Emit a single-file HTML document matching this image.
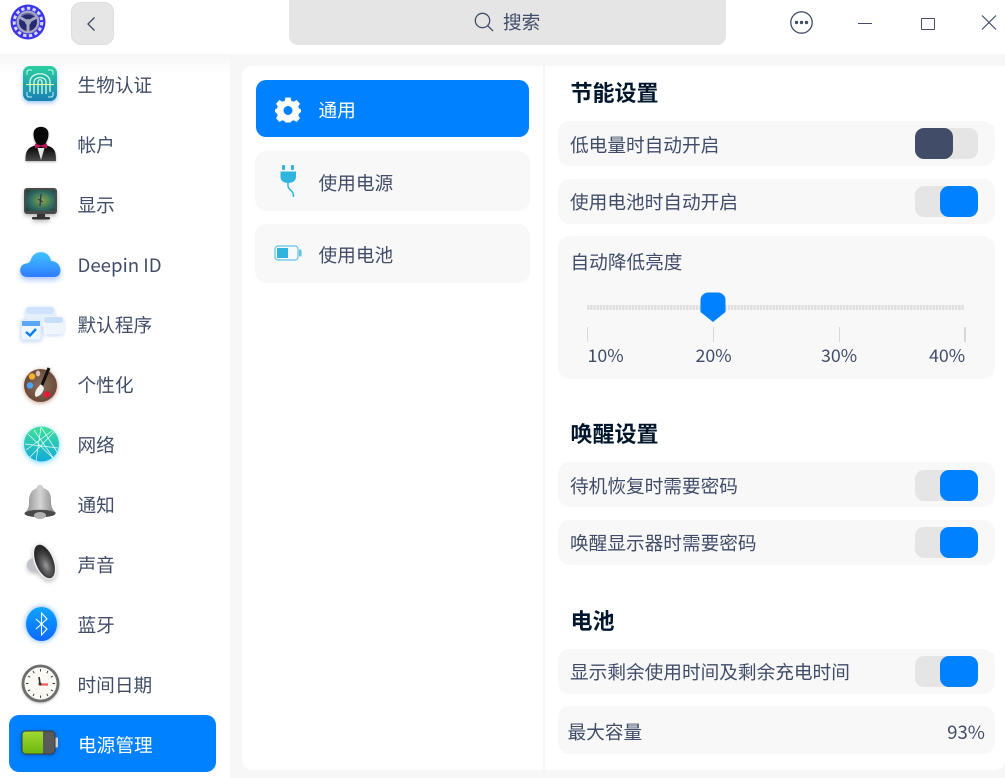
<!DOCTYPE html>
<html><head><meta charset="utf-8">
<style>
html,body{margin:0;padding:0}
body{width:1005px;height:778px;position:relative;overflow:hidden;background:#f7f7f7;font-family:"Noto Sans CJK SC","Liberation Sans",sans-serif;color:#414d68;font-size:18.67px}
.a{position:absolute}
.t{position:absolute;white-space:nowrap;line-height:28px;height:28px}
.r{position:absolute;left:558px;width:437px;background:#f8f8f8;border-radius:12px}
.h{position:absolute;left:570.5px;font-size:22px;font-weight:700;color:#00162c;line-height:30px;white-space:nowrap}
.sw{position:absolute;left:915px;width:63px;height:31px;background:#e5e5e5;border-radius:9px}
.sw i{position:absolute;top:0;width:38px;height:31px;border-radius:9px;background:#0081ff;right:0}
.sw.off i{left:0;right:auto;background:#414d68}
svg{position:absolute;overflow:visible}
</style></head><body>
<div class="a" style="left:0;top:0;width:1005px;height:54px;background:#fff"></div>
<div class="a" style="left:0;top:54px;width:230px;height:724px;background:#fff"></div>
<div class="a" style="left:0;top:54px;width:230px;height:20px;background:linear-gradient(#f6f6f6,#fff)"></div>
<div class="a" style="left:242px;top:66px;width:301px;height:704px;background:#fff;border-radius:10px 0 0 10px"></div>
<div class="a" style="left:545px;top:66px;width:460px;height:704px;background:#fff;border-radius:0 0 10px 0"></div>

<!-- logo -->
<svg style="left:10px;top:4px" width="36" height="36" viewBox="0 0 36 36">
<circle cx="18" cy="18" r="17.5" fill="#3a35ea"/>
<circle cx="18" cy="18" r="13.8" fill="none" stroke="#d6d6ee" stroke-width="3" stroke-dasharray="3.400 2.400"/>
<circle cx="18" cy="18" r="11.500" fill="#a5a6c0"/>
<circle cx="18" cy="18" r="9" fill="#252a72"/>
<path d="M18 18V28M18 18L9.300 13M18 18l8.700-5" stroke="#a5a6c0" stroke-width="3"/>
<path d="M12 11.500C15 9 21 9 24 11.500" stroke="#6d70a8" stroke-width="1.500" fill="none"/>
<circle cx="18" cy="18" r="3" fill="#a5a6c0"/>
</svg>
<!-- back -->
<div class="a" style="left:71px;top:2px;width:41px;height:41px;background:#e6e6e6;border:1px solid #dedede;border-radius:10px"></div>
<svg style="left:70px;top:2px" width="44" height="44"><path d="M24.500 15.500L18 22l6.500 6.500" fill="none" stroke="#414d68" stroke-width="1.400"/></svg>
<!-- search -->
<div class="a" style="left:289px;top:-8px;width:437px;height:53px;background:#e5e5e5;border-radius:9px"></div>
<svg style="left:473px;top:11px" width="22" height="22"><circle cx="9.500" cy="9.500" r="7.200" fill="none" stroke="#414d68" stroke-width="1.300"/><path d="M14.800 14.800L20 20" stroke="#414d68" stroke-width="1.300"/></svg>
<div class="t" style="left:503px;top:8px">搜索</div>
<!-- window buttons -->
<svg style="left:790px;top:11px" width="24" height="24"><circle cx="11.500" cy="11.500" r="10.700" fill="none" stroke="#414d68" stroke-width="1.300"/><circle cx="6.500" cy="11.500" r="1.700" fill="#414d68"/><circle cx="11.500" cy="11.500" r="1.700" fill="#414d68"/><circle cx="16.500" cy="11.500" r="1.700" fill="#414d68"/></svg>
<div class="a" style="left:858px;top:23px;width:14px;height:1px;background:#414d68"></div>
<div class="a" style="left:921px;top:18px;width:12px;height:10px;border:1.300px solid #414d68;border-radius:1px"></div>
<svg style="left:981px;top:15px" width="16" height="16"><path d="M1 0.500L15 14.500M15 0.500L1 14.500" stroke="#414d68" stroke-width="1.200"/></svg>

<!-- sidebar selected -->
<div class="a" style="left:9px;top:715px;width:207px;height:57px;background:#0081ff;border-radius:10px"></div>

<!-- sidebar icons -->
<svg style="left:23px;top:66px;filter:drop-shadow(0 2px 2px rgba(40,130,230,.45))" width="34" height="36" viewBox="0 0 34 36">
<defs><linearGradient id="g1" x1="0" y1="0" x2="0" y2="1"><stop offset="0" stop-color="#2ad0a0"/><stop offset="1" stop-color="#1a7fb5"/></linearGradient></defs>
<rect x="0" y="0" width="34" height="35" rx="7" fill="url(#g1)"/>
<path d="M4 9V6Q4 4 6 4H9M25 4H28Q30 4 30 6V9M4 26V29Q4 31 6 31H9M25 31H28Q30 31 30 29V26" fill="none" stroke="#c9f5ea" stroke-width="1"/>
<path d="M7 26V16C7 5 27 5 27 16V26M11 28V16C11 10 23 10 23 16V28M15 28V16C15 13 19 13 19 16V28" fill="none" stroke="#d8fbe6" stroke-width="1.300"/>
<path d="M3 18.500H31" stroke="#e8ff9c" stroke-width="1"/>
</svg>
<svg style="left:25px;top:126px;filter:drop-shadow(0 1px 1px rgba(0,0,0,.3))" width="32" height="36" viewBox="0 0 32 36">
<defs><linearGradient id="g2" x1="0" y1="0" x2="0" y2="1"><stop offset="0" stop-color="#050505"/><stop offset=".6" stop-color="#0a0a0a"/><stop offset="1" stop-color="#4a4a4a"/></linearGradient></defs>
<path d="M0.500 35C0.500 25.500 2 22 10 19.500L11.500 17.500C8.500 13 8 8 9 5C11 -0.500 21 -0.500 23 5C24 8 23.500 13 20.500 17.500L22 19.500C30 22 31 25.500 31 35Z" fill="url(#g2)"/>
<path d="M12.500 22L16 34L19.500 22Z" fill="#e8e8e8"/>
<path d="M10 17.500L16 19.500L22 17.500V22.500L16 20.500L10 22.500Z" fill="#c8125f"/>
</svg>
<svg style="left:24px;top:188px;filter:drop-shadow(0 2px 2px rgba(0,0,0,.3))" width="34" height="32" viewBox="0 0 34 32">
<defs><radialGradient id="g3" cx=".55" cy=".5" r=".75"><stop offset="0" stop-color="#86a94a"/><stop offset=".55" stop-color="#2f6c62"/><stop offset="1" stop-color="#23383a"/></radialGradient></defs>
<rect x="0" y="0" width="33" height="26" rx="3" fill="#4a4a4a"/>
<rect x="2" y="2" width="29" height="21" fill="url(#g3)"/>
<path d="M17 6L16 18M14 11L19 14" stroke="#3a3050" stroke-width="1.300"/>
<rect x="13" y="26" width="8" height="3" fill="#333"/><rect x="8" y="29" width="18" height="2.500" rx="1" fill="#333"/>
</svg>
<svg style="left:20px;top:249px;filter:drop-shadow(0 3px 3px rgba(40,110,255,.4))" width="42" height="32" viewBox="0 0 42 32">
<defs><linearGradient id="g4" x1="0" y1="0" x2="0" y2="1"><stop offset="0" stop-color="#3fc4ff"/><stop offset="1" stop-color="#2f7bff"/></linearGradient></defs>
<path d="M7 28C-2 28 -2 15 6.500 14.500C9 14 10 13 11 10.500C14 0.500 29 0.500 31 12C42 12 44 28 34 28Z" fill="url(#g4)"/>
</svg>
<svg style="left:20px;top:306px;filter:drop-shadow(0 1px 2px rgba(60,130,220,.35))" width="44" height="38" viewBox="0 0 44 38">
<rect x="6" y="1" width="28" height="20" rx="3" fill="#e6f0fc"/><rect x="6" y="1" width="28" height="7" rx="3" fill="#cfe3fc"/>
<rect x="24" y="11" width="19" height="17" rx="2.500" fill="#eef5fe" stroke="#fff" stroke-width=".6"/><rect x="24" y="11" width="19" height="6" rx="2.500" fill="#c8dffc"/>
<rect x="1" y="14" width="20" height="20" rx="2" fill="#edf5ff" stroke="#d8e7f9"/><rect x="2" y="15" width="18" height="5" fill="#5aa6f9"/>
<path d="M6 26L10 29.500L16 23" fill="none" stroke="#0a7df2" stroke-width="2.400"/>
</svg>
<svg style="left:23px;top:364px;filter:drop-shadow(0 1px 2px rgba(140,50,20,.5))" width="36" height="38" viewBox="0 0 36 38">
<defs><radialGradient id="g5"><stop offset="0" stop-color="#8a7060"/><stop offset="1" stop-color="#6a4a38"/></radialGradient></defs>
<circle cx="17.500" cy="21.500" r="16.500" fill="url(#g5)"/>
<circle cx="9" cy="12.500" r="3.200" fill="#f5b32c"/><circle cx="7" cy="21.500" r="3.200" fill="#4ba4f5"/><circle cx="24" cy="30.500" r="3.200" fill="#e8173c"/>
<ellipse cx="15" cy="9.500" rx="2.200" ry="3" fill="#dcc0b4"/>
<path d="M18 20L14.500 24C12 27 11 31 13 33C17 32 20 29 21 24Z" fill="#f5f2ee"/>
<path d="M19 21L26 4" stroke="#111" stroke-width="3"/>
</svg>
<svg style="left:24px;top:426px;filter:drop-shadow(0 1px 3px rgba(0,190,255,.6))" width="36" height="38" viewBox="0 0 36 38">
<defs><linearGradient id="g6" x1="0" y1="0" x2="0" y2="1"><stop offset="0" stop-color="#3fe098"/><stop offset="1" stop-color="#13a9dc"/></linearGradient></defs>
<circle cx="17.500" cy="18" r="17.500" fill="url(#g6)"/>
<path d="M4 8L30 33M17 1L12 35M1 18L34 22M30 6L6 31M17 1L33 26M10 4L30 33M2 24L28 5" stroke="#e9fff8" stroke-width=".7" fill="none"/>
</svg>
<svg style="left:24px;top:484px" width="33" height="36" viewBox="0 0 33 36">
<defs><linearGradient id="g7" x1="0" y1="0" x2="1" y2="0"><stop offset="0" stop-color="#8a8a8a"/><stop offset=".5" stop-color="#d5d5d5"/><stop offset="1" stop-color="#808080"/></linearGradient></defs>
<path d="M16 1C18 1 19 2 19 4C26 6 27 11 27 17C27 24 29 26 32 29C22 32 10 32 0.500 29C4 26 5 24 5 17C5 11 7 6 13 4C13 2 14 1 16 1Z" fill="url(#g7)"/>
<ellipse cx="16" cy="29.500" rx="15.500" ry="3.800" fill="#4a4a4a"/>
<ellipse cx="16" cy="31.500" rx="6" ry="3.500" fill="#b0b0b0"/>
</svg>
<svg style="left:26px;top:543px;filter:drop-shadow(0 2px 2px rgba(0,0,0,.25))" width="34" height="38" viewBox="0 0 34 38">
<defs><radialGradient id="g8" cx=".5" cy=".62"><stop offset="0" stop-color="#9a9a9a"/><stop offset=".4" stop-color="#606060"/><stop offset=".75" stop-color="#3c3c3c"/><stop offset="1" stop-color="#2a2a2a"/></radialGradient></defs>
<path d="M1.500 19C-0.500 24 3 29 8 28L24 35L10 3L8.500 15C6 15 3 16 1.500 19Z" fill="#c2c2ca"/>
<ellipse cx="18.500" cy="18.500" rx="9.500" ry="18.500" transform="rotate(-22 18.500 18.500)" fill="url(#g8)" stroke="#f0f0f0" stroke-width="1.500"/>
</svg>
<svg style="left:24px;top:604px;filter:drop-shadow(0 0 3px rgba(60,150,255,.8))" width="36" height="40" viewBox="0 0 36 40">
<defs><linearGradient id="g9" x1="0" y1="0" x2="0" y2="1"><stop offset="0" stop-color="#0fa4ff"/><stop offset="1" stop-color="#0b68ff"/></linearGradient></defs>
<ellipse cx="17.500" cy="20" rx="15.500" ry="17" fill="url(#g9)"/>
<path d="M12 15L23 25L17.500 31V9L23 15L12 25" fill="none" stroke="#fff" stroke-width="1.100"/>
</svg>
<svg style="left:21px;top:664px;filter:drop-shadow(0 1px 1px rgba(0,0,0,.25))" width="40" height="40" viewBox="0 0 40 40">
<circle cx="19.500" cy="19.500" r="17.500" fill="#faf9f4" stroke="#6e6e6e" stroke-width="2.800"/>
<path d="M19.500 5V7.500M19.500 31.500V34M5 19.500H7.500M31.500 19.500H34M12 7L13.200 9.200M27 7L25.800 9.200M7 12L9.200 13.200M32 12L29.800 13.200M7 27L9.200 25.800M32 27L29.800 25.800M12 32L13.200 29.800M27 32L25.800 29.800" stroke="#333" stroke-width=".9"/>
<path d="M18 13L19 20" stroke="#333" stroke-width="1.600"/><path d="M19 20.500H27" stroke="#f5585c" stroke-width="2.200"/>
<circle cx="19" cy="20" r="1.500" fill="#333"/>
</svg>
<svg style="left:21px;top:730px;filter:drop-shadow(0 1px 2px rgba(0,40,90,.4))" width="38" height="26" viewBox="0 0 38 26">
<defs><linearGradient id="g10" x1="0" y1="0" x2="0" y2="1"><stop offset="0" stop-color="#a0d834"/><stop offset="1" stop-color="#6fb80c"/></linearGradient></defs>
<rect x="33.500" y="7.500" width="3.500" height="10" rx="1" fill="#d0d0d0"/>
<rect x="1" y="1" width="33" height="23" rx="4" fill="#5a5a5a" stroke="#3a3a3a"/>
<path d="M5 1.500H22V23.500H5Q1.500 23.500 1.500 20V5Q1.500 1.500 5 1.500Z" fill="url(#g10)"/>
</svg>

<!-- sidebar text -->
<div class="t" style="left:77.5px;top:71px">生物认证</div>
<div class="t" style="left:77.5px;top:131px">帐户</div>
<div class="t" style="left:77.5px;top:191px">显示</div>
<div class="t" style="left:77.5px;top:251px">Deepin ID</div>
<div class="t" style="left:77.5px;top:311px">默认程序</div>
<div class="t" style="left:77.5px;top:371px">个性化</div>
<div class="t" style="left:77.5px;top:431px">网络</div>
<div class="t" style="left:77.5px;top:491px">通知</div>
<div class="t" style="left:77.5px;top:551px">声音</div>
<div class="t" style="left:77.5px;top:611px">蓝牙</div>
<div class="t" style="left:77.5px;top:671px">时间日期</div>
<div class="t" style="left:78px;top:731px;color:#fff">电源管理</div>

<!-- middle panel -->
<div class="a" style="left:256px;top:80px;width:273px;height:57px;background:#0081ff;border-radius:10px"></div>
<div class="a" style="left:255px;top:151px;width:275px;height:60px;background:#f8f8f8;border-radius:12px"></div>
<div class="a" style="left:255px;top:224px;width:275px;height:59px;background:#f8f8f8;border-radius:12px"></div>
<svg style="left:275px;top:97px" width="26" height="26" viewBox="0 0 26 26">
<path d="M10.500 0.500H15.500L16.300 3.800L18.700 4.800L21.600 3L25 6.700L23.200 9.500L24.200 11.500L26 12.500V15L24.200 16.500L23.200 18.500L25 21.300L21.600 25L18.700 23.200L16.300 24.200L15.500 25.500H10.500L9.700 24.200L7.300 23.200L4.400 25L1 21.300L2.800 18.500L1.800 16.500L0 15V12.500L1.800 11.500L2.800 9.500L1 6.700L4.400 3L7.300 4.800L9.700 3.800Z" fill="#fff"/>
<circle cx="13" cy="13.500" r="4.500" fill="#0081ff"/>
</svg>
<svg style="left:280px;top:164px" width="18" height="34" viewBox="0 0 18 34">
<rect x="2" y="1" width="3" height="5" rx="1" fill="#2fb3df"/><rect x="11" y="1" width="3" height="5" rx="1" fill="#2fb3df"/>
<path d="M0.500 7.500H16V13C16 17 12 19 8 19C4 19 0.500 17 0.500 13Z" fill="#2fb3df"/>
<path d="M8 19V22C8 26 14 26 13.500 33" fill="none" stroke="#2fb3df" stroke-width="1.500"/>
</svg>
<svg style="left:274px;top:245px" width="28" height="18" viewBox="0 0 28 18">
<rect x="1" y="1" width="23" height="14" rx="3" fill="none" stroke="#5cc3e5" stroke-width="1.200"/>
<rect x="3" y="3" width="11" height="10" fill="#2fb3df"/>
<rect x="25" y="4.500" width="2.500" height="7" rx="1" fill="#5cc3e5"/>
</svg>
<div class="t" style="left:318.5px;top:96px;color:#fff">通用</div>
<div class="t" style="left:318.500px;top:169px">使用电源</div>
<div class="t" style="left:318.500px;top:241px">使用电池</div>

<!-- right -->
<div class="h" style="top:77px">节能设置</div>
<div class="r" style="top:121px;height:45px"></div>
<div class="t" style="left:570px;top:131px">低电量时自动开启</div>
<div class="sw off" style="top:128px"><i></i></div>
<div class="r" style="top:179px;height:45px"></div>
<div class="t" style="left:570px;top:188px">使用电池时自动开启</div>
<div class="sw" style="top:186px"><i></i></div>

<div class="r" style="top:236px;height:143px"></div>
<div class="t" style="left:570.5px;top:248px">自动降低亮度</div>
<div class="a" style="left:587px;top:305px;width:377px;height:5px;background:repeating-linear-gradient(90deg,#dfdfdf 0 2.200px,#f2f2f2 2.200px 3.200px)"></div>
<svg style="left:700px;top:292px" width="26" height="30" viewBox="0 0 26 30"><path d="M8 0.500H18C22 0.500 25.500 4 25.500 8V20L13 30L0.500 20V8C0.500 4 4 0.500 8 0.500Z" fill="#0081ff"/></svg>
<div class="a" style="left:587px;top:327px;width:1px;height:15px;background:#d8d8d8"></div>
<div class="a" style="left:713px;top:327px;width:1px;height:15px;background:#d8d8d8"></div>
<div class="a" style="left:839px;top:327px;width:1px;height:15px;background:#d8d8d8"></div>
<div class="a" style="left:964px;top:327px;width:2px;height:15px;background:#d8d8d8"></div>
<div class="t" style="left:587.5px;top:341px;font-size:17.8px">10%</div>
<div class="t" style="left:695.5px;top:341px;font-size:17.8px">20%</div>
<div class="t" style="left:821px;top:341px;font-size:17.8px">30%</div>
<div class="t" style="left:929px;top:341px;font-size:17.8px">40%</div>

<div class="h" style="top:418px">唤醒设置</div>
<div class="r" style="top:462px;height:45px"></div>
<div class="t" style="left:570px;top:472px">待机恢复时需要密码</div>
<div class="sw" style="top:470px"><i></i></div>
<div class="r" style="top:520px;height:45px"></div>
<div class="t" style="left:570px;top:529px">唤醒显示器时需要密码</div>
<div class="sw" style="top:527px"><i></i></div>

<div class="h" style="top:605px">电池</div>
<div class="r" style="top:649px;height:45px"></div>
<div class="t" style="left:570px;top:658px">显示剩余使用时间及剩余充电时间</div>
<div class="sw" style="top:656px"><i></i></div>
<div class="r" style="top:706px;height:48px"></div>
<div class="t" style="left:567.5px;top:718px">最大容量</div>
<div class="t" style="right:20px;top:718px">93%</div>
</body></html>
